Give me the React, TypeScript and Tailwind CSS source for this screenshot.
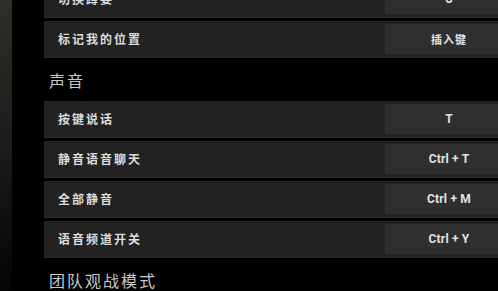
import React from 'react';

type Binding = { label: string; keyName: string };

const topRows: Binding[] = [
  { label: '切换蹲姿', keyName: 'U' },
  { label: '标记我的位置', keyName: '插入键' },
];

const voiceRows: Binding[] = [
  { label: '按键说话', keyName: 'T' },
  { label: '静音语音聊天', keyName: 'Ctrl + T' },
  { label: '全部静音', keyName: 'Ctrl + M' },
  { label: '语音频道开关', keyName: 'Ctrl + Y' },
];

const cjk = { fontFamily: '"Noto Sans CJK SC", "Noto Sans", sans-serif' };
const latin = { fontFamily: 'Roboto, "Noto Sans CJK SC", sans-serif' };

const KeyRow: React.FC<Binding> = ({ label, keyName }) => {
  const isLatin = /^[A-Za-z +]+$/.test(keyName);
  return (
    <div className="flex h-[37px] w-[476px] shrink-0 items-center border-b border-[#2c2c2c] bg-[#222222]">
      <span className="flex-1 pl-[14px] text-[12px] font-semibold tracking-[2px] text-[#dcdcdc]" style={cjk}>
        {label}
      </span>
      <div className="mr-[7px] flex h-[30px] w-[128px] shrink-0 items-center justify-center bg-[#2f2f2f]">
        {isLatin ? (
          <span className="text-[12px] font-bold tracking-[0.2px] text-[#e2e2e2]" style={latin}>
            {keyName}
          </span>
        ) : (
          <span className="text-[11px] font-bold tracking-[1px] text-[#e2e2e2]" style={cjk}>
            {keyName}
          </span>
        )}
      </div>
    </div>
  );
};

const SectionTitle: React.FC<{ title: string }> = ({ title }) => (
  <div className="flex h-[43px] shrink-0 items-center pl-[5px]">
    <span className="text-[16px] tracking-[2px] text-[#c9c9c9]" style={cjk}>
      {title}
    </span>
  </div>
);

export default function App() {
  return (
    <div className="relative flex h-[291px] w-[498px] items-start overflow-hidden bg-black">
      <div className="h-full w-[12px] shrink-0 bg-gradient-to-b from-[#2e2f2a] via-[#1c1c1a] to-[#050505]" />
      <div className="w-[32px] shrink-0" />
      <div className="mt-[-19px] flex shrink-0 flex-col">
        <div className="flex shrink-0 flex-col gap-[3px]">
          {topRows.map((r) => (
            <KeyRow key={r.label} {...r} />
          ))}
        </div>
        <SectionTitle title="声音" />
        <div className="flex shrink-0 flex-col gap-[3px]">
          {voiceRows.map((r) => (
            <KeyRow key={r.label} {...r} />
          ))}
        </div>
        <SectionTitle title="团队观战模式" />
      </div>
    </div>
  );
}
